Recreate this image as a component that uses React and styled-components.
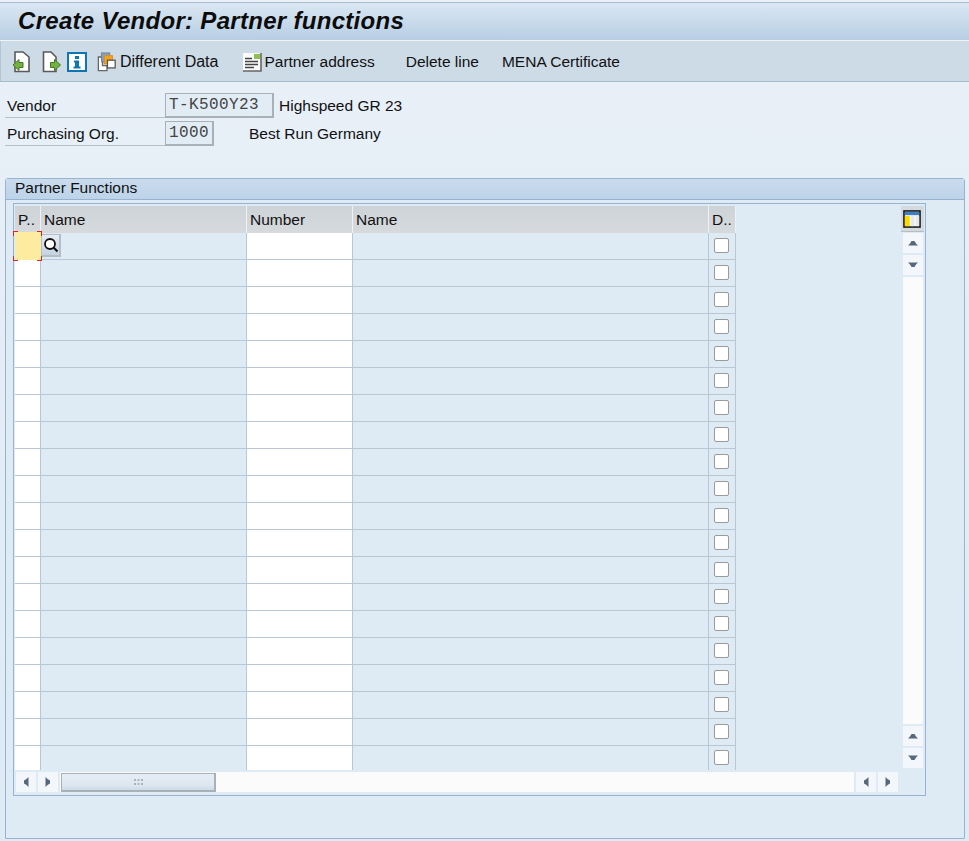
import styled, { createGlobalStyle } from 'styled-components'

const Global = createGlobalStyle`
  html, body { margin: 0; padding: 0; }
  body { font-family: "Liberation Sans", Arial, sans-serif; color: #111; }
`

const Page = styled.div`
  width: 969px;
  height: 841px;
  overflow: hidden;
  display: flex;
  flex-direction: column;
  background: linear-gradient(180deg, #e9f0f8 0%, #deeaf4 100%);
`

const TitleBar = styled.div`
  height: 38px;
  margin-top: 2px;
  padding: 0 0 2px 18px;
  box-sizing: border-box;
  display: flex;
  align-items: center;
  border-top: 1px solid #a9bdd1;
  box-shadow: 0 1px 0 #eef3f8;
  margin-bottom: 1px;
  background: linear-gradient(180deg, #dbe7f3 0%, #b7cee4 100%);
  font-size: 24px;
  font-weight: bold;
  font-style: italic;
  letter-spacing: 0.3px;
  color: #0c0c0c;
`

const Toolbar = styled.div`
  height: 41px;
  display: flex;
  align-items: center;
  padding: 1px 0 0 11px;
  box-sizing: border-box;
  background: #cddbe7;
  border-bottom: 1px solid #a9bccd;
  border-left: 1px solid #b4c5d5;
`

const ToolIcon = styled.span`
  width: 20px;
  height: 22px;
  display: flex;
  align-items: center;
  margin-right: ${p => p.$gap || 0}px;
  flex: none;
`

const ToolText = styled.span`
  font-size: ${p => p.$size || 15.5}px;
  margin-left: ${p => p.$left || 0}px;
  margin-right: ${p => p.$right || 0}px;
  white-space: nowrap;
`

const Fields = styled.div`
  display: flex;
  flex-direction: column;
  gap: 3px;
  padding: 11px 0 0 5px;
  height: 96px;
  box-sizing: border-box;
`

const FieldRow = styled.div`
  display: flex;
  align-items: stretch;
  height: 25px;
`

const FieldLabel = styled.div`
  width: 160px;
  padding-left: 2px;
  box-sizing: border-box;
  font-size: 15.5px;
  line-height: 25px;
  border-bottom: 1px solid #b3bfc9;
`

const FieldValue = styled.div`
  width: ${p => p.$width}px;
  box-sizing: border-box;
  border: 1px solid #a9b1b8;
  border-width: 1px 2px 2px 1px;
  background: #e2ecf5;
  padding-left: 3px;
  font-family: "Liberation Mono", monospace;
  font-size: 16px;
  letter-spacing: 0.4px;
  line-height: 23px;
  color: #444;
`

const FieldText = styled.div`
  margin-left: ${p => p.$left}px;
  font-size: 15.5px;
  line-height: 25px;
`

const GroupBox = styled.section`
  margin: 0 4px 2px 5px;
  height: 661px;
  box-sizing: border-box;
  border: 1px solid #97b3d0;
  border-top-left-radius: 3px;
  border-top-right-radius: 3px;
  background: #deeaf4;
`

const GroupHead = styled.div`
  height: 20px;
  padding-left: 9px;
  font-size: 15.5px;
  line-height: 18px;
  background: linear-gradient(180deg, #cadcee 0%, #bdd3e9 100%);
  border-bottom: 1px solid #97b3d0;
`

const TableFrame = styled.div`
  margin: 3px 0 0 7px;
  width: 913px;
  height: 593px;
  box-sizing: border-box;
  border: 1px solid #97b3d0;
  padding: 2px 1px 0 1px;
  display: flex;
  flex-direction: column;
`

const TableArea = styled.div`
  height: 564px;
  display: flex;
  justify-content: space-between;
`

const Grid = styled.div`
  width: 721px;
  flex: none;
`

const cols = '26px 206px 106px 356px 27px'

const HeadRow = styled.div`
  display: grid;
  grid-template-columns: ${cols};
  height: 27px;
`

const HeadCell = styled.div`
  box-sizing: border-box;
  padding-left: 3px;
  font-size: 15.5px;
  line-height: 28px;
  background: linear-gradient(180deg, #ced3d7 0%, #d6dadd 100%);
  border-right: 1px solid #eef2f5;
  white-space: nowrap;
  overflow: hidden;
`

const Rows = styled.div`
  position: relative;
`

const Row = styled.div`
  display: grid;
  grid-template-columns: ${cols};
  height: 27px;

  &:last-child {
    height: 24px;
  }

  &:last-child > div {
    border-bottom: 0;
  }
`

const Cell = styled.div`
  box-sizing: border-box;
  background: ${p => (p.$input ? '#fff' : 'transparent')};
  border-right: 1px solid #b9c7d4;
  border-bottom: 1px solid #b9c7d4;
  display: flex;
  align-items: center;
  justify-content: center;
  padding-right: ${p => (p.$check ? 2 : 0)}px;
`

const FocusCell = styled.div`
  position: absolute;
  left: 0;
  top: -1px;
  width: 26px;
  height: 28px;
  background: #fdeb9f;
  z-index: 3;
`

const Corner = styled.i`
  position: absolute;
  width: 4px;
  height: 4px;
  ${p => (p.$bottom ? 'bottom: -1px;' : 'top: -1px;')}
  ${p => (p.$right ? 'right: -1px;' : 'left: -2px;')}
  border: 0 solid #d8232a;
  ${p => (p.$bottom ? 'border-bottom-width: 1.5px;' : 'border-top-width: 1.5px;')}
  ${p => (p.$right ? 'border-right-width: 1.5px;' : 'border-left-width: 1.5px;')}
`

const SearchHelp = styled.div`
  position: absolute;
  left: 26px;
  top: 1px;
  width: 20px;
  height: 23px;
  box-sizing: border-box;
  border: 1px solid #b5bdc5;
  border-width: 1px 2px 2px 1px;
  background: linear-gradient(180deg, #e6edf4 0%, #c3d2e2 100%);
  display: flex;
  align-items: center;
  padding-left: 1px;
  z-index: 2;
`

const CheckBox = styled.span`
  width: 13px;
  height: 13px;
  margin-bottom: 1px;
  border: 1px solid #9a9a9a;
  border-radius: 2px;
  background: #fff;
  display: block;
`

const VScroll = styled.div`
  width: 23px;
  display: flex;
  flex-direction: column;
  align-items: center;
  height: 100%;
`

const ConfigButton = styled.div`
  width: 23px;
  height: 26px;
  box-sizing: border-box;
  background: #d4d9de;
  border-bottom: 1px solid #b5bcc3;
  display: flex;
  align-items: center;
  justify-content: center;
  padding-right: 1px;
  margin-bottom: 1px;
`

const ScrollButton = styled.div`
  width: 20px;
  height: 20px;
  flex: none;
  margin-bottom: 2px;
  background: #f3f6fa;
  display: flex;
  align-items: center;
  justify-content: center;
`

const VTrack = styled.div`
  flex: 1;
  width: 20px;
  margin-bottom: 2px;
  background: #fbfbfb;
`

const HScroll = styled.div`
  display: flex;
  align-items: center;
  height: 20px;
  margin-top: 2px;
  padding-left: 1px;
  width: 885px;
  box-sizing: border-box;
`

const HButton = styled(ScrollButton)`
  margin: 0 2px 0 0;
`

const HTrack = styled.div`
  flex: 1;
  height: 20px;
  display: flex;
  background: #fbfbfb;
  margin-right: 2px;
  padding-left: 1px;
`

const Thumb = styled.div`
  width: 155px;
  height: 19px;
  margin-top: 1px;
  box-sizing: border-box;
  border: 1px solid #a9b0b7;
  border-width: 1px 2px 2px 1px;
  background: linear-gradient(180deg, #e6edf5 0%, #dde7f0 70%, #cbdbe7 100%);
  display: flex;
  align-items: center;
  justify-content: center;
`

const Arrow = ({ dir }) => {
  const rot = { up: 0, down: 180, left: 270, right: 90 }[dir]
  return (
    <svg width="14" height="14" viewBox="0 0 14 14" style={{ transform: `rotate(${rot}deg)` }}>
      <path d="M2 9.5 L4 7.5 L5.5 5 H8.5 L10 7.5 L12 9.5 Z" fill="#56697c" />
    </svg>
  )
}

const Grip = () => (
  <svg width="9" height="6" viewBox="0 0 9 6">
    <path d="M0 0h2v2H0z M3.5 0h2v2h-2z M7 0h2v2H7z M0 4h2v2H0z M3.5 4h2v2h-2z M7 4h2v2H7z" fill="#a8b3bd" />
  </svg>
)

const DocIcon = ({ out }) => (
  <svg width="20" height="22" viewBox="0 0 20 22">
    <path d={out ? 'M1.5 1 H9 L14 6 V20.5 H1.5 Z' : 'M3 1 H11 L17 6 V20.5 H3 Z'} fill="#fff" stroke="#5a5a5a" strokeWidth="1.6" />
    {out ? (
      <path d="M8.5 11.5 H12.5 V8.5 L18.5 14 L12.5 19.5 V16.5 H8.5 Z" fill="#76b043" stroke="#3f7a22" strokeWidth="1" />
    ) : (
      <path d="M11 11.5 H7 V8.5 L1 14 L7 19.5 V16.5 H11 Z" fill="#76b043" stroke="#3f7a22" strokeWidth="1" />
    )}
  </svg>
)

const InfoIcon = () => (
  <svg width="20" height="20" viewBox="0 0 20 20">
    <rect x="1" y="1" width="18" height="18" fill="#fff" stroke="#0f75b5" strokeWidth="2" />
    <rect x="8" y="4" width="4" height="3" fill="#0f75b5" />
    <path d="M7 8.5 H12 V14.5 H13.5 V16.5 H6.5 V14.5 H8 V10.5 H7 Z" fill="#0f75b5" />
  </svg>
)

const CopiesIcon = () => (
  <svg width="22" height="22" viewBox="0 0 22 22">
    <path d="M1.5 5.5 H6 V15 H11 V20.5 H1.5 Z" fill="#fff" stroke="#666" strokeWidth="1.4" />
    <rect x="5" y="1" width="9" height="10" fill="#7fa2c6" stroke="#6c8098" />
    <rect x="8" y="4" width="9" height="9" fill="#f6a21a" stroke="#e48a10" />
    <rect x="11.5" y="9" width="8.5" height="8.5" fill="#fff" stroke="#555" strokeWidth="1.4" />
  </svg>
)

const AddressIcon = () => (
  <svg width="20" height="20" viewBox="0 0 20 20">
    <rect x="1" y="1" width="18" height="18" fill="#fbfbfb" />
    <path d="M1 19 H19 V1" fill="none" stroke="#666" strokeWidth="1.6" />
    <rect x="12" y="2" width="6" height="5" fill="#8cc152" />
    <path d="M3 6.5 H10 M3 9.5 H16 M3 12.5 H16 M3 15.5 H12" stroke="#444" strokeWidth="1.4" />
  </svg>
)

const SearchIcon = () => (
  <svg width="16" height="16" viewBox="0 0 16 16">
    <circle cx="7" cy="7" r="5" fill="#fff" stroke="#111" strokeWidth="1.8" />
    <path d="M10.5 10.5 L14.5 14.5" stroke="#111" strokeWidth="2.2" />
  </svg>
)

const ColumnsIcon = () => (
  <svg width="18" height="18" viewBox="0 0 18 18">
    <rect x="1" y="1" width="16" height="16" fill="#fff" stroke="#111" strokeWidth="1.6" />
    <rect x="1.8" y="1.8" width="14.4" height="3.4" fill="#3f7fbf" />
    <rect x="1.8" y="6" width="5" height="10.2" fill="#ffd800" />
    <rect x="8" y="6" width="3.5" height="10.2" fill="#e6e9eb" />
    <rect x="12.5" y="6" width="3.7" height="10.2" fill="#e6e9eb" />
  </svg>
)

const rows = Array.from({ length: 20 }, (_, i) => i)

function App() {
  return (
    <Page>
      <Global />
      <TitleBar>Create Vendor: Partner functions</TitleBar>
      <Toolbar>
        <ToolIcon $gap={10}><DocIcon /></ToolIcon>
        <ToolIcon $gap={5}><DocIcon out /></ToolIcon>
        <ToolIcon $gap={10}><InfoIcon /></ToolIcon>
        <ToolIcon><CopiesIcon /></ToolIcon>
        <ToolText $size={16} $left={3} $right={24}>Different Data</ToolText>
        <ToolIcon><AddressIcon /></ToolIcon>
        <ToolText $left={2} $right={31}>Partner address</ToolText>
        <ToolText $right={23}>Delete line</ToolText>
        <ToolText>MENA Certificate</ToolText>
      </Toolbar>
      <Fields>
        <FieldRow>
          <FieldLabel>Vendor</FieldLabel>
          <FieldValue $width={109}>T-K500Y23</FieldValue>
          <FieldText $left={5}>Highspeed GR 23</FieldText>
        </FieldRow>
        <FieldRow>
          <FieldLabel>Purchasing Org.</FieldLabel>
          <FieldValue $width={49}>1000</FieldValue>
          <FieldText $left={35}>Best Run Germany</FieldText>
        </FieldRow>
      </Fields>
      <GroupBox>
        <GroupHead>Partner Functions</GroupHead>
        <TableFrame>
          <TableArea>
            <Grid>
              <HeadRow>
                <HeadCell>P..</HeadCell>
                <HeadCell>Name</HeadCell>
                <HeadCell>Number</HeadCell>
                <HeadCell>Name</HeadCell>
                <HeadCell>D..</HeadCell>
              </HeadRow>
              <Rows>
                <FocusCell>
                  <Corner />
                  <Corner $right />
                  <Corner $bottom />
                  <Corner $bottom $right />
                </FocusCell>
                <SearchHelp><SearchIcon /></SearchHelp>
                {rows.map(i => (
                  <Row key={i}>
                    <Cell $input />
                    <Cell />
                    <Cell $input />
                    <Cell />
                    <Cell $check><CheckBox /></Cell>
                  </Row>
                ))}
              </Rows>
            </Grid>
            <VScroll>
              <ConfigButton><ColumnsIcon /></ConfigButton>
              <ScrollButton><Arrow dir="up" /></ScrollButton>
              <ScrollButton><Arrow dir="down" /></ScrollButton>
              <VTrack />
              <ScrollButton><Arrow dir="up" /></ScrollButton>
              <ScrollButton><Arrow dir="down" /></ScrollButton>
            </VScroll>
          </TableArea>
          <HScroll>
            <HButton><Arrow dir="left" /></HButton>
            <HButton><Arrow dir="right" /></HButton>
            <HTrack><Thumb><Grip /></Thumb></HTrack>
            <HButton><Arrow dir="left" /></HButton>
            <HButton><Arrow dir="right" /></HButton>
          </HScroll>
        </TableFrame>
      </GroupBox>
    </Page>
  )
}

export default App
